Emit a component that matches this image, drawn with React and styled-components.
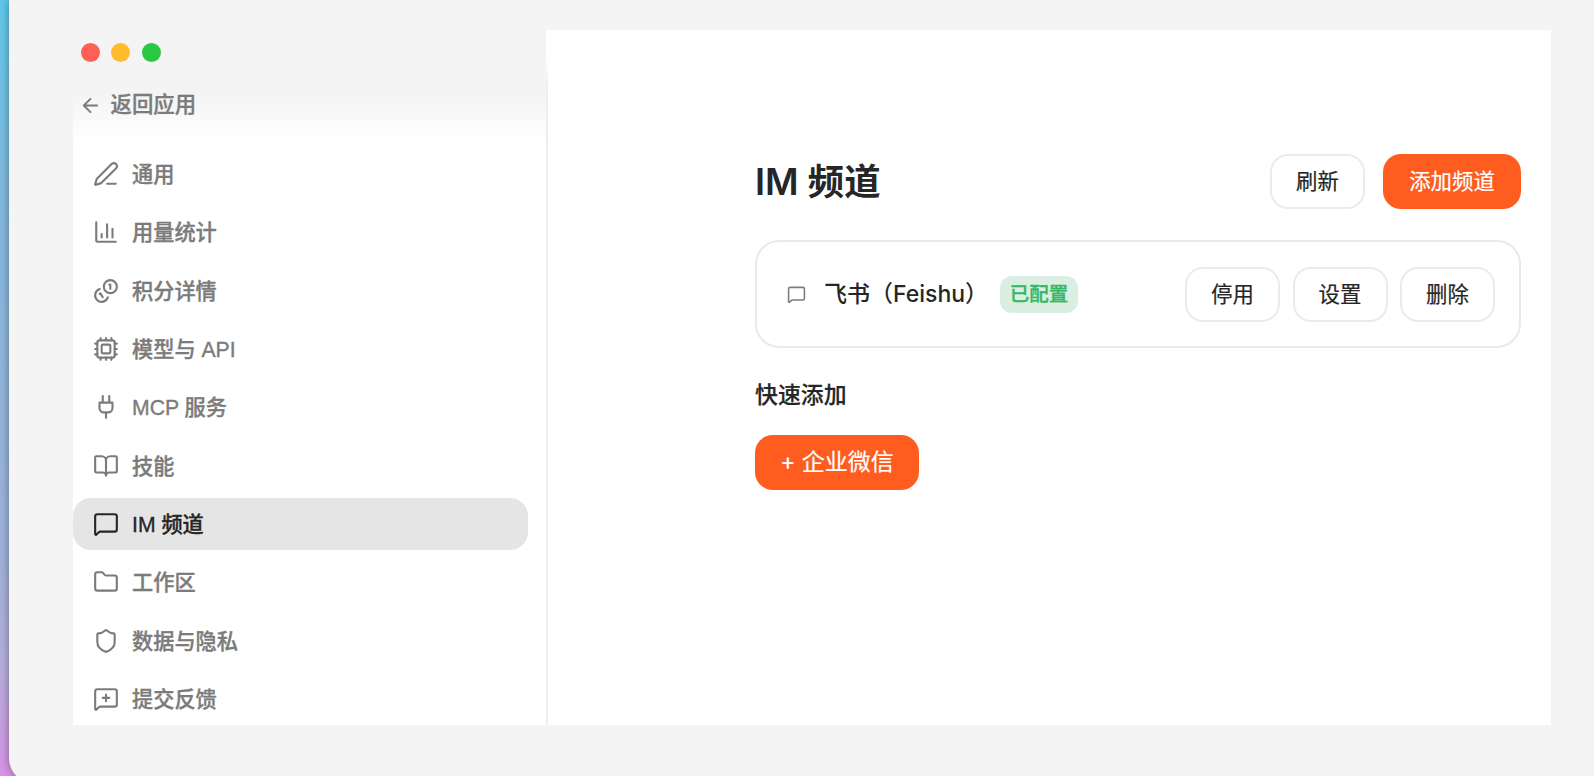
import React from 'react';
import styled, { createGlobalStyle } from 'styled-components';

const navItems = [
  { name: 'pen', label: '通用' },
  { name: 'chart', label: '用量统计' },
  { name: 'coins', label: '积分详情' },
  { name: 'cpu', label: '模型与 API' },
  { name: 'plug', label: 'MCP 服务' },
  { name: 'book', label: '技能' },
  { name: 'message', label: 'IM 频道', active: true },
  { name: 'folder', label: '工作区' },
  { name: 'shield', label: '数据与隐私' },
  { name: 'feedback', label: '提交反馈' },
];

const icons = {
  back: <path d="m12 19-7-7 7-7M19 12H5" />,
  pen: <path d="M13 21h8M21.174 6.812a1 1 0 0 0-3.986-3.987L3.842 16.174a2 2 0 0 0-.5.83l-1.321 4.352a.5.5 0 0 0 .623.622l4.353-1.32a2 2 0 0 0 .83-.497z" />,
  chart: <path d="M3 3v17a1 1 0 0 0 1 1h17M8 17v-3M13 17V5M18 17V9" />,
  coins: (
    <>
      <circle cx="16" cy="8" r="6" />
      <path d="M13.744 17.736a6 6 0 1 1-7.48-7.48M15 6h1v4M6.134 14.768l.866-.5 2 3.464" />
    </>
  ),
  cpu: (
    <>
      <rect x="4" y="4" width="16" height="16" rx="2" />
      <rect x="8" y="8" width="8" height="8" rx="1" />
      <path d="M12 20v2M12 2v2M17 20v2M17 2v2M2 12h2M2 17h2M2 7h2M20 12h2M20 17h2M20 7h2M7 20v2M7 2v2" />
    </>
  ),
  plug: <path d="M12 22v-5M9 8V2M15 8V2M18 8v5a4 4 0 0 1-4 4h-4a4 4 0 0 1-4-4V8Z" />,
  book: <path d="M12 7v14M3 18a1 1 0 0 1-1-1V4a1 1 0 0 1 1-1h5a4 4 0 0 1 4 4 4 4 0 0 1 4-4h5a1 1 0 0 1 1 1v13a1 1 0 0 1-1 1h-6a3 3 0 0 0-3 3 3 3 0 0 0-3-3z" />,
  message: <path d="M22 17a2 2 0 0 1-2 2H6.828a2 2 0 0 0-1.414.586l-2.202 2.202A.71.71 0 0 1 2 21.286V5a2 2 0 0 1 2-2h16a2 2 0 0 1 2 2z" />,
  folder: <path d="M20 20a2 2 0 0 0 2-2V8a2 2 0 0 0-2-2h-7.9a2 2 0 0 1-1.69-.9L9.6 3.9A2 2 0 0 0 7.93 3H4a2 2 0 0 0-2 2v13a2 2 0 0 0 2 2Z" />,
  shield: <path d="M20 13c0 5-3.5 7.5-7.66 8.95a1 1 0 0 1-.67-.01C7.5 20.5 4 18 4 13V6a1 1 0 0 1 1-1c2 0 4.5-1.2 6.24-2.72a1.17 1.17 0 0 1 1.52 0C14.51 3.81 17 5 19 5a1 1 0 0 1 1 1z" />,
  feedback: <path d="M22 17a2 2 0 0 1-2 2H6.828a2 2 0 0 0-1.414.586l-2.202 2.202A.71.71 0 0 1 2 21.286V5a2 2 0 0 1 2-2h16a2 2 0 0 1 2 2zM12 8v6M9 11h6" />,
};

const Icon = ({ name, size = 26, weight = 1.95 }) => (
  <IconSvg viewBox="0 0 24 24" $size={size} strokeWidth={weight}>
    {icons[name]}
  </IconSvg>
);

const App = () => {
  return (
    <Desktop>
      <GlobalStyle />
      <Window>
        <Sidebar>
          <SidebarHead>
            <Lights>
              <Light $color="#ff5f57" />
              <Light $color="#febc2e" />
              <Light $color="#28c840" />
            </Lights>
            <Back>
              <Icon name="back" size={23} />
              <BackLabel>返回应用</BackLabel>
            </Back>
          </SidebarHead>
          <Nav>
            {navItems.map(({ name, label, active }) => (
              <NavItem key={name} $active={active}>
                <Icon name={name} />
                <NavLabel>{label}</NavLabel>
              </NavItem>
            ))}
          </Nav>
        </Sidebar>
        <Divider />
        <Main>
          <Header>
            <Title>IM 频道</Title>
            <Button>刷新</Button>
            <PrimaryButton>添加频道</PrimaryButton>
          </Header>
          <Card>
            <CardIcon><Icon name="message" size={19} /></CardIcon>
            <CardName>飞书（Feishu）</CardName>
            <Badge>已配置</Badge>
            <Actions>
              <Button>停用</Button>
              <Button>设置</Button>
              <Button>删除</Button>
            </Actions>
          </Card>
          <SubTitle>快速添加</SubTitle>
          <QuickButton>+ 企业微信</QuickButton>
        </Main>
      </Window>
    </Desktop>
  );
};

const GlobalStyle = createGlobalStyle`
  * {
    box-sizing: border-box;
  }
  body {
    margin: 0;
    font-family: Inter, "Noto Sans CJK SC", sans-serif;
  }
`

const Desktop = styled.div`
  width: 1594px;
  height: 776px;
  padding-left: 9px;
  overflow: hidden;
  background: linear-gradient(#62c8ec 0, #84bade 200px, #a1b2da 560px, #b6b0dc 665px, #d794e6 776px);
`

const Window = styled.div`
  display: flex;
  height: 784px;
  padding: 30px 43px 59px 64px;
  border-radius: 0 0 0 26px;
  background: #f4f4f4;
  box-shadow: 0 0 10px rgba(0, 0, 0, 0.4);
`

const Sidebar = styled.div`
  width: 473px;
  height: 695px;
  background: #fff;
`

const SidebarHead = styled.div`
  height: 115px;
  padding: 13px 0 0 7.5px;
  background: linear-gradient(#f4f4f4 63px, #fff 114px);
`

const Lights = styled.div`
  display: flex;
  gap: 11.8px;
`

const Light = styled.div`
  width: 19px;
  height: 19px;
  border-radius: 50%;
  background: ${({ $color }) => $color};
`

const Back = styled.div`
  display: flex;
  align-items: center;
  height: 30px;
  margin: 28px 0 0 -2px;
  gap: 9px;
  color: #7b7b7b;
  font-size: 21.4px;
  font-weight: 500;
  -webkit-text-stroke: 0.35px;
`

const BackLabel = styled.span`
  padding-bottom: 5px;
`

const Nav = styled.div`
  display: flex;
  flex-direction: column;
  gap: 6.35px;
  padding: 3px 18px 0 0;
`

const NavItem = styled.div`
  display: flex;
  align-items: center;
  flex-shrink: 0;
  height: 52px;
  gap: 13.5px;
  padding-left: 19.5px;
  border-radius: 18px;
  color: ${({ $active }) => ($active ? '#262626' : '#7b7b7b')};
  background: ${({ $active }) => ($active ? '#e5e5e5' : 'transparent')};
`

const NavLabel = styled.span`
  padding-bottom: 3px;
  font-family: "Liberation Sans", "Noto Sans CJK SC", sans-serif;
  font-size: 21.2px;
  font-weight: 500;
  -webkit-text-stroke: 0.35px;
`

const IconSvg = styled.svg`
  display: block;
  flex-shrink: 0;
  width: ${({ $size }) => $size}px;
  height: ${({ $size }) => $size}px;
  fill: none;
  stroke: currentColor;
  stroke-linecap: round;
  stroke-linejoin: round;
`

const Divider = styled.div`
  width: 2px;
  height: 695px;
  background: linear-gradient(#fff 30px, #eeeeee 56px);
`

const Main = styled.div`
  flex: 1;
  height: 695px;
  padding: 124px 30px 0 207px;
  background: #fff;
  color: #262626;
`

const Header = styled.div`
  display: flex;
  align-items: flex-start;
  height: 56px;
  gap: 18px;
`

const Title = styled.h1`
  flex: 1;
  margin: 0;
  font-size: 36.4px;
  font-weight: 600;
  line-height: 56px;
`

const Button = styled.button`
  width: 95px;
  height: 55px;
  padding: 0 0 4px;
  border: 2px solid #ebebeb;
  border-radius: 18px;
  background: #fff;
  color: #262626;
  font-family: inherit;
  font-size: 21.4px;
  font-weight: 400;
  -webkit-text-stroke: 0.2px;
`

const PrimaryButton = styled(Button)`
  width: 138px;
  border: none;
  background: #ff5c1f;
  color: #fff;
`

const Card = styled.div`
  display: flex;
  align-items: center;
  height: 108px;
  margin-top: 30px;
  padding: 0 24px 0 30px;
  border: 2px solid #e9e9e9;
  border-radius: 24px;
`

const CardIcon = styled.div`
  color: #7b7b7b;
`

const CardName = styled.div`
  margin-left: 18px;
  padding-bottom: 4px;
  font-size: 23px;
  font-weight: 500;
`

const Badge = styled.div`
  display: flex;
  align-items: center;
  justify-content: center;
  width: 78px;
  height: 37px;
  margin-left: 12px;
  padding-bottom: 3px;
  border-radius: 12px;
  background: #daefe1;
  color: #33b864;
  font-size: 19.5px;
  font-weight: 500;
  -webkit-text-stroke: 0.3px;
`

const Actions = styled.div`
  display: flex;
  gap: 12.5px;
  margin-left: auto;
`

const SubTitle = styled.h2`
  height: 34px;
  margin: 30px 0 23px;
  font-size: 22.9px;
  font-weight: 500;
  line-height: 34px;
  -webkit-text-stroke: 0.2px;
`

const QuickButton = styled(PrimaryButton)`
  width: 164px;
  padding-bottom: 5px;
  font-size: 23px;
`

export default App;
